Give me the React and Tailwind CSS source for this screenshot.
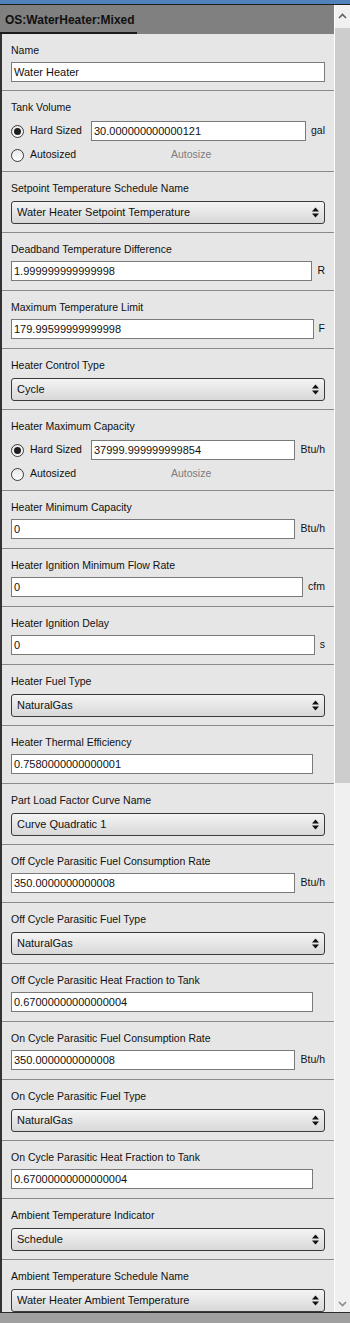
import React from "react";

const sections = [
  { type: "input", label: "Name", value: "Water Heater", first: true },
  { type: "radio", label: "Tank Volume", value: "30.000000000000121", unit: "gal" },
  { type: "select", label: "Setpoint Temperature Schedule Name", value: "Water Heater Setpoint Temperature" },
  { type: "input", label: "Deadband Temperature Difference", value: "1.999999999999998", unit: "R" },
  { type: "input", label: "Maximum Temperature Limit", value: "179.99599999999998", unit: "F" },
  { type: "select", label: "Heater Control Type", value: "Cycle" },
  { type: "radio", label: "Heater Maximum Capacity", value: "37999.999999999854", unit: "Btu/h" },
  { type: "input", label: "Heater Minimum Capacity", value: "0", unit: "Btu/h" },
  { type: "input", label: "Heater Ignition Minimum Flow Rate", value: "0", unit: "cfm" },
  { type: "input", label: "Heater Ignition Delay", value: "0", unit: "s" },
  { type: "select", label: "Heater Fuel Type", value: "NaturalGas" },
  { type: "input", label: "Heater Thermal Efficiency", value: "0.7580000000000001" },
  { type: "select", label: "Part Load Factor Curve Name", value: "Curve Quadratic 1" },
  { type: "input", label: "Off Cycle Parasitic Fuel Consumption Rate", value: "350.0000000000008", unit: "Btu/h" },
  { type: "select", label: "Off Cycle Parasitic Fuel Type", value: "NaturalGas" },
  { type: "input", label: "Off Cycle Parasitic Heat Fraction to Tank", value: "0.67000000000000004" },
  { type: "input", label: "On Cycle Parasitic Fuel Consumption Rate", value: "350.0000000000008", unit: "Btu/h" },
  { type: "select", label: "On Cycle Parasitic Fuel Type", value: "NaturalGas" },
  { type: "input", label: "On Cycle Parasitic Heat Fraction to Tank", value: "0.67000000000000004" },
  { type: "select", label: "Ambient Temperature Indicator", value: "Schedule" },
  { type: "select", label: "Ambient Temperature Schedule Name", value: "Water Heater Ambient Temperature", last: true },
];

function Label({ children }) {
  return <div className="h-[14px] leading-[14px] text-[10.5px] whitespace-nowrap">{children}</div>;
}

function TextBox({ value }) {
  return (
    <div className="flex-1 min-w-0 h-[20px] border border-[#7a7a7a] bg-white pl-[2px] flex items-center text-[11px] whitespace-nowrap overflow-hidden">
      {value}
    </div>
  );
}

function Unit({ unit }) {
  if (!unit) return <div className="w-[12px] shrink-0" />;
  return <div className="ml-[5px] text-[10.5px] whitespace-nowrap shrink-0">{unit}</div>;
}

function Radio({ checked }) {
  return (
    <div className="w-[13px] h-[13px] rounded-full border border-[#3a3a3a] bg-linear-to-b from-[#e8e8e8] to-white flex items-center justify-center shrink-0">
      {checked ? <div className="w-[7px] h-[7px] rounded-full bg-[#1e1e1e]" /> : null}
    </div>
  );
}

function SelectBox({ value }) {
  return (
    <div className="h-[23px] rounded-[3px] border border-[#3a3a3a] bg-linear-to-b from-[#f4f4f4] to-[#d8d8d8] flex items-center pl-[5px] pr-[5px] text-[11px]">
      <div className="flex-1 whitespace-nowrap overflow-hidden">{value}</div>
      <svg width="7" height="11" viewBox="0 0 7 11" className="shrink-0">
        <polygon points="0,4.5 3.5,0.5 7,4.5" fill="#111" />
        <polygon points="0,6.5 3.5,10.5 7,6.5" fill="#111" />
      </svg>
    </div>
  );
}

function Section({ s }) {
  if (s.type === "input") {
    return (
      <div className={s.first ? "px-[9px] pt-[9px] pb-[8px] border-b border-[#8a8a8a]" : "px-[9px] pt-[9px] pb-[9px] border-b border-[#8a8a8a]"}>
        <Label>{s.label}</Label>
        <div className="mt-[5px] flex items-center">
          <TextBox value={s.value} />
          {s.first ? null : <Unit unit={s.unit} />}
        </div>
      </div>
    );
  }
  if (s.type === "select") {
    return (
      <div className={s.last ? "px-[9px] pt-[9px] pb-[8px]" : "px-[9px] pt-[9px] pb-[8px] border-b border-[#8a8a8a]"}>
        <Label>{s.label}</Label>
        <div className="mt-[6px]">
          <SelectBox value={s.value} />
        </div>
      </div>
    );
  }
  return (
    <div className="px-[9px] pt-[9px] pb-[6px] border-b border-[#8a8a8a]">
      <Label>{s.label}</Label>
      <div className="mt-[7px] h-[20px] flex items-center">
        <div className="w-[80px] flex items-center shrink-0">
          <Radio checked />
          <span className="ml-[6px] text-[10.5px] whitespace-nowrap">Hard Sized</span>
        </div>
        <TextBox value={s.value} />
        <Unit unit={s.unit} />
      </div>
      <div className="mt-[4px] h-[20px] flex items-center">
        <div className="w-[80px] flex items-center shrink-0">
          <Radio />
          <span className="ml-[6px] text-[10.5px] whitespace-nowrap">Autosized</span>
        </div>
        <span className="ml-[80px] text-[10.5px] text-[#7d7d7d] whitespace-nowrap">Autosize</span>
      </div>
    </div>
  );
}

function Scrollbar() {
  return (
    <div className="w-[15px] bg-[#f0f0f0] flex flex-col">
      <div className="h-[22px] flex items-center justify-center shrink-0">
        <svg width="9" height="6" viewBox="0 0 9 6">
          <polyline points="1,5 4.5,1.5 8,5" fill="none" stroke="#606060" strokeWidth="1.6" />
        </svg>
      </div>
      <div className="mt-[1px] h-[755px] bg-[#cdcdcd] shrink-0" />
      <div className="flex-1" />
      <div className="h-[17px] flex items-center justify-center shrink-0">
        <svg width="9" height="6" viewBox="0 0 9 6">
          <polyline points="1,1 4.5,4.5 8,1" fill="none" stroke="#8a8a8a" strokeWidth="1.6" />
        </svg>
      </div>
    </div>
  );
}

export default function App() {
  return (
    <div className="w-[350px] h-[1323px] overflow-hidden flex flex-col bg-[#2d2d2d] font-['Liberation_Sans',Arial,sans-serif] text-[#111]">
      <div className="h-[4px] bg-[#5282bb] shrink-0" />
      <div className="h-[1px] bg-[#1c1c1c] shrink-0" />
      <div className="flex flex-1 min-h-0">
        <div className="flex flex-col w-[334px] min-h-0">
          <div className="h-[29px] bg-[#808080] shrink-0 flex">
            <div className="w-[137px] border-b-2 border-[#1a1a1a] pl-[5px] pt-[2px] flex items-center text-[12px] font-bold text-[#111] whitespace-nowrap">
              OS:WaterHeater:Mixed
            </div>
          </div>
          <div className="flex flex-1 min-h-0">
            <div className="w-[2px] bg-[#333333] shrink-0" />
            <div className="flex-1 bg-[#e6e6e6] overflow-hidden">
              {sections.map((s, i) => (
                <Section key={i} s={s} />
              ))}
            </div>
          </div>
        </div>
        <div className="w-[1px] bg-white shrink-0" />
        <Scrollbar />
      </div>
      <div className="h-[1px] bg-[#2a2a2a] shrink-0" />
      <div className="h-[10px] bg-[#a0a0a0] shrink-0" />
    </div>
  );
}
